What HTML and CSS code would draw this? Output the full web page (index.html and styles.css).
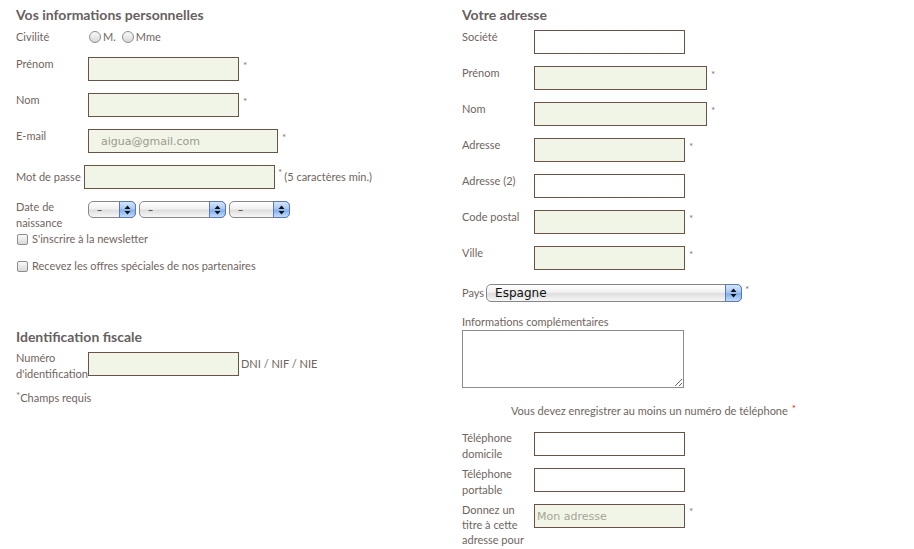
FILE: index.html
```html
<!DOCTYPE html>
<html lang="fr">
<head>
    <meta charset="UTF-8">
    <title>Inscription</title>
    <link rel="stylesheet" href="styles.css">
</head>
<body>
<div class="page">
    <!-- colonne gauche -->
    <div class="col col-left">
        <h2>Vos informations personnelles</h2>
        <div class="row row-civ">
            <span class="lbl">Civilité</span>
            <label class="radio"><input type="radio" name="civ">M.</label>
            <label class="radio"><input type="radio" name="civ">Mme</label>
        </div>
        <div class="row">
            <span class="lbl">Prénom</span>
            <input type="text" class="field req-field">
            <span class="req">*</span>
        </div>
        <div class="row">
            <span class="lbl">Nom</span>
            <input type="text" class="field req-field">
            <span class="req">*</span>
        </div>
        <div class="row">
            <span class="lbl">E-mail</span>
            <input type="text" class="field req-field field-email" value="aigua@gmail.com">
            <span class="req">*</span>
        </div>
        <div class="row row-mdp">
            <span class="lbl lbl-mdp">Mot de passe</span>
            <input type="password" class="field req-field field-mdp">
            <span class="req">*</span>
            <span class="hint">(5 caractères min.)</span>
        </div>
        <div class="row row-date">
            <span class="lbl">Date de naissance</span>
            <span class="sel sel-day"><select><option>–</option></select><span class="arrows"><svg width="7" height="10" viewBox="0 0 7 10"><path d="M3.5 0.5L6.5 4H0.5z M3.5 9.5L6.5 6H0.5z" fill="#111"/></svg></span></span>
            <span class="sel sel-month"><select><option>–</option></select><span class="arrows"><svg width="7" height="10" viewBox="0 0 7 10"><path d="M3.5 0.5L6.5 4H0.5z M3.5 9.5L6.5 6H0.5z" fill="#111"/></svg></span></span>
            <span class="sel sel-year"><select><option>–</option></select><span class="arrows"><svg width="7" height="10" viewBox="0 0 7 10"><path d="M3.5 0.5L6.5 4H0.5z M3.5 9.5L6.5 6H0.5z" fill="#111"/></svg></span></span>
        </div>
        <label class="check"><input type="checkbox">S'inscrire à la newsletter</label>
        <label class="check check-2"><input type="checkbox">Recevez les offres spéciales de nos partenaires</label>

        <h2 class="h-fisc">Identification fiscale</h2>
        <div class="row row-fisc">
            <span class="lbl">Numéro d'identification</span>
            <input type="text" class="field req-field field-fisc">
            <span class="dni">DNI / NIF / NIE</span>
        </div>
        <p class="requis"><span class="req">*</span>Champs requis</p>
    </div>

    <!-- colonne droite -->
    <div class="col col-right">
        <h2>Votre adresse</h2>
        <div class="row row-first">
            <span class="lbl">Société</span>
            <input type="text" class="field">
        </div>
        <div class="row">
            <span class="lbl">Prénom</span>
            <input type="text" class="field req-field field-wide">
            <span class="req">*</span>
        </div>
        <div class="row">
            <span class="lbl">Nom</span>
            <input type="text" class="field req-field field-wide">
            <span class="req">*</span>
        </div>
        <div class="row">
            <span class="lbl">Adresse</span>
            <input type="text" class="field req-field">
            <span class="req">*</span>
        </div>
        <div class="row">
            <span class="lbl">Adresse (2)</span>
            <input type="text" class="field">
        </div>
        <div class="row">
            <span class="lbl">Code postal</span>
            <input type="text" class="field req-field">
            <span class="req">*</span>
        </div>
        <div class="row">
            <span class="lbl">Ville</span>
            <input type="text" class="field req-field">
            <span class="req">*</span>
        </div>
        <div class="row-pays">
            <span class="lbl-pays">Pays</span>
            <span class="sel sel-pays"><select><option>Espagne</option></select><span class="arrows"><svg width="7" height="10" viewBox="0 0 7 10"><path d="M3.5 0.5L6.5 4H0.5z M3.5 9.5L6.5 6H0.5z" fill="#111"/></svg></span></span>
            <span class="req">*</span>
        </div>
        <div class="info-lbl">Informations complémentaires</div>
        <textarea class="info"></textarea>
        <p class="phone-note">Vous devez enregistrer au moins un numéro de téléphone <span class="req red">*</span></p>
        <div class="row row-phone">
            <span class="lbl">Téléphone domicile</span>
            <input type="text" class="field">
        </div>
        <div class="row">
            <span class="lbl">Téléphone portable</span>
            <input type="text" class="field">
        </div>
        <div class="row row-alias">
            <span class="lbl lbl-alias">Donnez un titre à cette adresse pour</span>
            <input type="text" class="field req-field field-alias" placeholder="Mon adresse">
            <span class="req">*</span>
        </div>
    </div>
</div>
</body>
</html>
```

FILE: styles.css
```css
html, body { overflow: hidden; }
body { margin: 0; font-family: Lato, "Open Sans", sans-serif; font-size: 11px; line-height: 16px; color: #6f6560; background: #fff; }
.page { display: flex; }
.col { padding-top: 5px; }
.col-left { width: 446px; padding-left: 16px; flex-shrink: 0; }
.col-right { flex: 1; }
h2 { margin: 0; font-size: 14px; line-height: 20px; font-weight: 700; color: #66615f; }

.row { display: flex; align-items: flex-start; height: 36px; }
.row-first, .row-civ { margin-top: 4px; }
.row-civ { align-items: center; height: 16px; margin-bottom: 11px; }
.lbl { width: 72px; flex-shrink: 0; }
.field { box-sizing: border-box; width: 151px; height: 24px; margin: 1px 0 0; border: 1px solid #6a5246; background: #fff; padding: 0 2px; font-family: "DejaVu Sans", sans-serif; font-size: 11px; color: #9c9a8c; outline: none; }
.req-field { background: #f0f5e7; }
.field-email { width: 190px; padding-left: 12px; }
.field-wide { width: 173px; }
.field::placeholder { color: #a5a593; }
.req { font-size: 10px; line-height: 10px; color: #7d7573; margin-left: 4px; margin-top: 4px; }
.red { color: #d9261c; margin-left: 1px; vertical-align: top; }

.radio { display: flex; align-items: center; margin-right: 5px; }
.radio input, .check input { -webkit-appearance: none; appearance: none; margin: 0; background: linear-gradient(#fafafa, #d8d8d8); border: 1px solid #8d8d8d; box-sizing: border-box; }
.radio input { width: 12px; height: 12px; border-radius: 50%; margin: 0 2px 0 1px; }

.row-mdp { height: 35px; }
.lbl-mdp { width: 68px; white-space: nowrap; padding-top: 5px; }
.field-mdp { width: 191px; }
.row-mdp .req { margin-left: 3px; margin-top: 3px; }
.hint { padding-top: 5px; margin-left: 2px; }

.row-date { height: 32px; }
.sel { position: relative; display: inline-block; margin-top: 2px; margin-right: 3px; height: 17px; }
.sel select { -webkit-appearance: none; appearance: none; box-sizing: border-box; width: 100%; height: 100%; margin: 0; border: 1px solid #868686; border-radius: 5px; padding: 0 0 0 8px; background: linear-gradient(#ffffff, #f1f1f1 45%, #dedede 55%, #f7f7f7); font-family: "DejaVu Sans", sans-serif; font-size: 10px; color: #333; outline: none; }
.sel .arrows { position: absolute; top: 0; right: 0; bottom: 0; width: 17px; box-sizing: border-box; border: 1px solid #5c79b4; border-radius: 0 5px 5px 0; background: linear-gradient(#d4e5fb, #a9c9f3 45%, #7fb0ef 55%, #c3dcfa); display: flex; align-items: center; justify-content: center; }
.sel-day { width: 48px; }
.sel-month { width: 87px; }
.sel-year { width: 61px; }

.check { display: flex; align-items: center; height: 16px; padding-left: 1px; }
.check input { width: 11px; height: 11px; border-radius: 2px; margin-right: 4px; }
.check-2 { margin-top: 11px; }

.h-fisc { margin-top: 53px; }
.row-fisc { margin-top: 3px; height: 32px; }
.field-fisc { margin-top: 2px; }
.dni { padding-top: 6px; margin-left: 2px; }
.requis { margin: 8px 0 0; }
.requis .req { margin: 0; vertical-align: top; }

.row-pays { display: flex; align-items: center; padding-top: 3px; height: 18px; }
.lbl-pays { margin-right: 2px; }
.sel-pays { width: 256px; height: 18px; margin: 0; }
.sel-pays select { font-family: "DejaVu Sans", sans-serif; font-size: 12px; color: #111; padding-left: 8px; }
.row-pays .req { align-self: flex-start; margin-left: 3px; margin-top: 0; }
.info-lbl { margin-top: 12px; }
.info { display: block; box-sizing: border-box; width: 222px; height: 58px; margin: 0; border: 1px solid #8c8c8c; }
.phone-note { margin: 15px 0 0; padding-left: 49px; }
.row-phone { margin-top: 11px; }
.row-phone .field, .row-phone ~ .row .field { margin-top: 2px; }
.row-alias { height: 46px; }
.lbl-alias { line-height: 15px; }
```
